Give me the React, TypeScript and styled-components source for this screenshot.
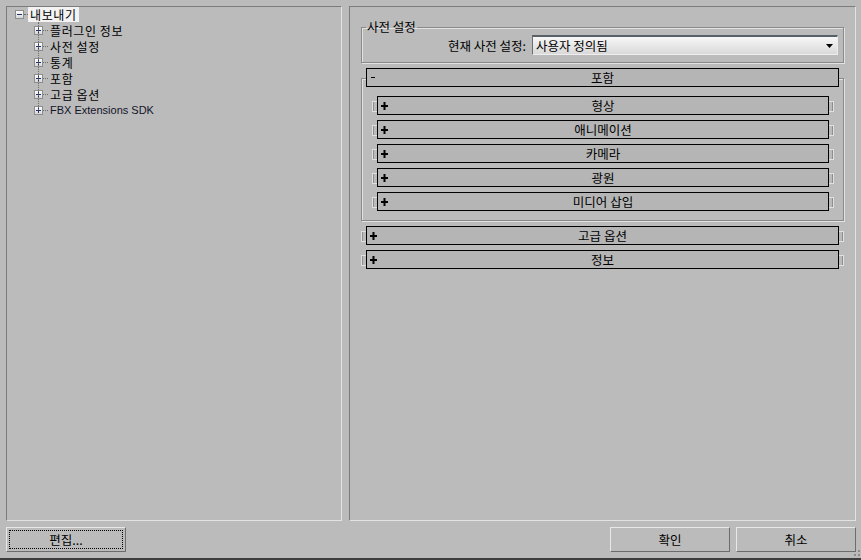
import React from "react";
import styled, {createGlobalStyle} from 'styled-components'

const GlobalStyle = createGlobalStyle`
  html, body {
    margin: 0;
    padding: 0;
    background: #3d3d3d;
  }
  body {
    font-family: "Noto Sans CJK KR", "Liberation Sans", sans-serif;
    font-size: 12.5px;
    color: #000;
  }
`;

const Window = styled.div`
  position: relative;
  box-sizing: border-box;
  display: flex;
  flex-direction: column;
  width: 861px;
  height: 560px;
  padding: 6px 5px 0 6px;
  background: #bbbbbb;
  border-bottom: 2px solid #3d3d3d;
`;

const Main = styled.div`
  display: flex;
  gap: 7px;
  height: 515px;
`;

const Panel = styled.div<{$width?: number}>`
  box-sizing: border-box;
  ${p => p.$width ? `width: ${p.$width}px;` : 'flex: 1;'}
  height: 100%;
  border: 1px solid;
  border-color: #7c7c7c #e2e2e2 #e2e2e2 #7c7c7c;
`;

/* ---------- tree ---------- */

const Tree = styled.div`
  padding: 0 0 0 8px;
`;

const TreeRow = styled.div<{$root?: boolean}>`
  display: flex;
  align-items: center;
  height: ${p => p.$root ? 15 : 16}px;
`;

const ExpandBox = styled.span`
  box-sizing: border-box;
  display: flex;
  align-items: center;
  justify-content: center;
  width: 9px;
  height: 9px;
  border: 1px solid #8d8d8d;
  background: linear-gradient(#ffffff, #d6d6d6);
  flex-shrink: 0;
`;

const Connector = styled.span<{$w: number}>`
  width: ${p => p.$w}px;
  border-top: 1px dotted #6c6c6c;
  flex-shrink: 0;
`;

const TreeLabel = styled.span<{$selected?: boolean; $latin?: boolean}>`
  padding: 0 2px;
  line-height: 15px;
  white-space: nowrap;
  letter-spacing: ${p => p.$latin ? 0 : 0.6}px;
  background: ${p => p.$selected ? '#f3f3f3' : 'transparent'};
  font-family: ${p => p.$latin ? '"Liberation Sans", sans-serif' : 'inherit'};
  font-size: ${p => p.$latin ? 11 : 12}px;
  color: ${p => p.$latin ? '#14142a' : '#000'};
`;

const Children = styled.div`
  position: relative;
  margin-left: 19px;

  &::before {
    content: "";
    position: absolute;
    left: 4px;
    top: 0;
    bottom: 8px;
    border-left: 1px dotted #6c6c6c;
  }
`;

const BoxGlyph: React.FC<{open?: boolean}> = ({open}) => (
    <svg width="5" height="5" viewBox="0 0 5 5">
        <rect x="0" y="2" width="5" height="1" fill="#23356e"/>
        {!open && <rect x="2" y="0" width="1" height="5" fill="#23356e"/>}
    </svg>
);

/* ---------- right side ---------- */

const Content = styled.div`
  padding: 13px 11px 0 11px;
`;

const GroupBox = styled.fieldset`
  margin: 0;
  padding: 1px 5px 7px 4px;
  min-width: 0;
  border: 1px solid #8a8a8a;
  box-shadow: 1px 1px 0 #e2e2e2, inset 1px 1px 0 #e2e2e2;
`;

const Legend = styled.legend`
  padding: 0 1px;
  line-height: 14px;
`;

const PresetRow = styled.div`
  display: flex;
  justify-content: flex-end;
  align-items: center;
  gap: 6px;
`;

const Combo = styled.div`
  box-sizing: border-box;
  display: flex;
  align-items: center;
  justify-content: space-between;
  width: 306px;
  height: 20px;
  padding: 0 4px 0 3px;
  border-top: 2px solid #596066;
  border-left: 1px solid #6a7076;
  border-right: 1px solid #ececec;
  border-bottom: 1px solid #eeeeee;
  background: linear-gradient(#f7f7f7, #d9d9d9);
`;

const RolloutList = styled.div`
  display: flex;
  flex-direction: column;
  gap: 5px;
  margin-top: 5px;
`;

const RolloutRow = styled.div`
  display: flex;
  align-items: flex-start;
`;

const Bracket = styled.span<{$side: 'left' | 'right'}>`
  box-sizing: border-box;
  width: 5px;
  height: 11px;
  margin-top: 5px;
  flex-shrink: 0;
  border: 1px solid #e0e0e0;
  ${p => p.$side === 'left'
    ? 'border-right: none; box-shadow: inset 1px 0 0 #8e8e8e;'
    : 'border-left: none; box-shadow: inset -1px 0 0 #8e8e8e;'}
`;

const RolloutHeader = styled.div<{$inset?: boolean}>`
  position: relative;
  z-index: 1;
  box-sizing: border-box;
  flex: 1;
  display: grid;
  grid-template-columns: 1fr auto 1fr;
  align-items: center;
  height: 19px;
  margin: ${p => p.$inset ? '0 5px' : '0'};
  padding: 0 3px;
  border: 1px solid #000;
  background: #b5b5b5;
  line-height: 17px;
`;

const Sign = styled.span`
  display: flex;
  justify-self: start;
`;

const Expanded = styled.div`
  display: flex;
  flex-direction: column;
`;

const RolloutFrame = styled.div`
  display: flex;
  flex-direction: column;
  gap: 5px;
  margin-top: -9px;
  padding: 17px 9px 9px 10px;
  border: 1px solid #8a8a8a;
  box-shadow: 1px 1px 0 #e2e2e2, inset 1px 1px 0 #e2e2e2;
`;

/* ---------- footer ---------- */

const Footer = styled.div`
  display: flex;
  justify-content: space-between;
  margin-top: 6px;
`;

const ButtonGroup = styled.div`
  display: flex;
  gap: 6px;
`;

const Button = styled.button<{$focused?: boolean}>`
  box-sizing: border-box;
  width: 120px;
  height: 25px;
  padding: 0;
  border: 1px solid;
  border-color: #e8e8e8 #6c6c6c #6c6c6c #e8e8e8;
  background: #bbbbbb;
  font-family: inherit;
  font-size: 12.5px;
  color: #000;
  ${p => p.$focused ? 'outline: 1px dotted #000; outline-offset: -4px;' : ''}
`;

const Grip = styled.svg`
  position: absolute;
  right: 1px;
  bottom: 2px;
`;

const Plus = () => (
    <svg width="7" height="8" viewBox="0 0 7 8">
        <rect x="0" y="3" width="7" height="2" fill="#000"/>
        <rect x="2.5" y="0" width="2" height="8" fill="#000"/>
    </svg>
);

const Minus = () => (
    <svg width="5" height="8" viewBox="0 0 5 8">
        <rect x="1" y="3" width="4" height="1" fill="#000"/>
    </svg>
);

const Rollout: React.FC<{title: string}> = ({title}) => (
    <RolloutRow>
        <Bracket $side="left"/>
        <RolloutHeader>
            <Sign><Plus/></Sign>
            <span>{title}</span>
            <span/>
        </RolloutHeader>
        <Bracket $side="right"/>
    </RolloutRow>
);

const treeItems = ['플러그인 정보', '사전 설정', '통계', '포함', '고급 옵션'];
const includeItems = ['형상', '애니메이션', '카메라', '광원', '미디어 삽입'];

const App: React.FC = () => {
    return (
        <Window>
            <GlobalStyle/>
            <Main>
                <Panel $width={336}>
                    <Tree>
                        <TreeRow $root>
                            <ExpandBox><BoxGlyph open/></ExpandBox>
                            <Connector $w={4}/>
                            <TreeLabel $selected>내보내기</TreeLabel>
                        </TreeRow>
                        <Children>
                            {treeItems.map((item, idx) => (
                                <TreeRow key={idx}>
                                    <ExpandBox><BoxGlyph/></ExpandBox>
                                    <Connector $w={5}/>
                                    <TreeLabel>{item}</TreeLabel>
                                </TreeRow>
                            ))}
                            <TreeRow>
                                <ExpandBox><BoxGlyph/></ExpandBox>
                                <Connector $w={5}/>
                                <TreeLabel $latin>FBX Extensions SDK</TreeLabel>
                            </TreeRow>
                        </Children>
                    </Tree>
                </Panel>
                <Panel>
                    <Content>
                        <GroupBox>
                            <Legend>사전 설정</Legend>
                            <PresetRow>
                                <span>현재 사전 설정:</span>
                                <Combo>
                                    <span>사용자 정의됨</span>
                                    <svg width="7" height="4" viewBox="0 0 7 4">
                                        <path d="M0 0h7L3.5 4z" fill="#000"/>
                                    </svg>
                                </Combo>
                            </PresetRow>
                        </GroupBox>
                        <RolloutList>
                            <Expanded>
                                <RolloutHeader $inset>
                                    <Sign><Minus/></Sign>
                                    <span>포함</span>
                                    <span/>
                                </RolloutHeader>
                                <RolloutFrame>
                                    {includeItems.map((item, idx) => <Rollout key={idx} title={item}/>)}
                                </RolloutFrame>
                            </Expanded>
                            <Rollout title="고급 옵션"/>
                            <Rollout title="정보"/>
                        </RolloutList>
                    </Content>
                </Panel>
            </Main>
            <Footer>
                <Button $focused>편집...</Button>
                <ButtonGroup>
                    <Button>확인</Button>
                    <Button>취소</Button>
                </ButtonGroup>
            </Footer>
            <Grip width="6" height="6" viewBox="0 0 6 6">
                <rect x="4" y="0" width="2" height="2" fill="#8a8a8a"/>
                <rect x="0" y="4" width="2" height="2" fill="#8a8a8a"/>
                <rect x="4" y="4" width="2" height="2" fill="#8a8a8a"/>
            </Grip>
        </Window>
    )
};

export default App;
